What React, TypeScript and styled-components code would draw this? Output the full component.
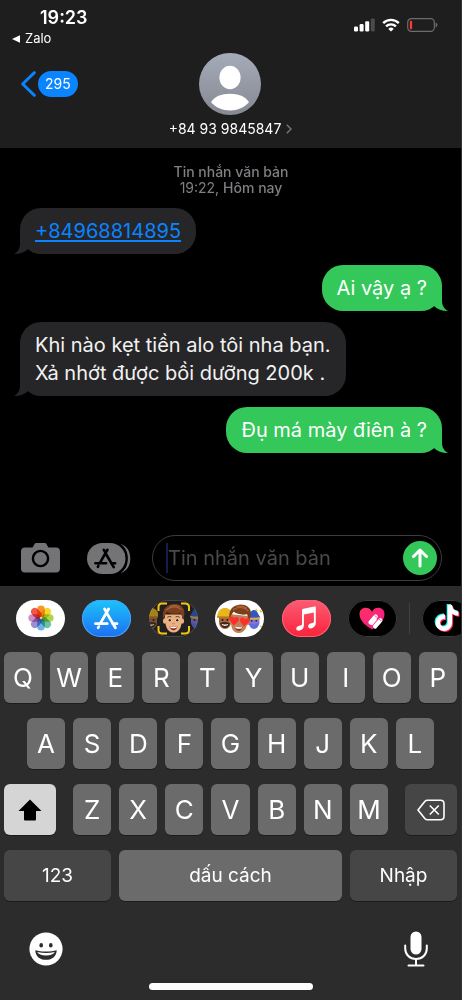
import React from "react";
import styled, { createGlobalStyle, css } from "styled-components";
import { FaTiktok } from "react-icons/fa6";

const GlobalStyle = createGlobalStyle`
  * { box-sizing: border-box; }
  body { margin: 0; background: #000; }
  button, input { font: inherit; color: inherit; }
  button { border: 0; padding: 0; background: none; cursor: pointer; }
  svg { display: block; flex: none; }
`;

const Screen = styled.div`
  min-height: 100vh;
  display: flex;
  flex-direction: column;
  overflow: hidden;
  background: #000;
  color: #fff;
  border-right: 1px solid #333;
  font-family: Inter, "Liberation Sans", sans-serif;
`;

const Header = styled.header`
  background: #1e1e1e;
  padding-bottom: 10px;
`;

const StatusBar = styled.div`
  display: flex;
  justify-content: space-between;
  height: 53px;
  padding: 7px 23px 0 12px;
`;

const StatusLeft = styled.div`
  display: flex;
  flex-direction: column;
`;

const Clock = styled.time`
  padding-left: 28px;
  font-size: 18px;
  line-height: 22px;
  font-weight: 600;
`;

const BackToApp = styled.a`
  display: flex;
  align-items: center;
  gap: 5px;
  margin-top: 1px;
  font-size: 13px;
  line-height: 17px;
  color: #fff;
  text-decoration: none;
`;

const StatusIcons = styled.div`
  display: flex;
  align-items: center;
  gap: 7px;
  height: 14px;
  margin-top: 11px;
`;

const NavBar = styled.nav`
  display: grid;
  grid-template-columns: 1fr auto 1fr;
  padding-left: 20px;
  padding-right: 20px;
`;

const BackButton = styled.button`
  display: flex;
  align-items: center;
  justify-self: start;
  gap: 2px;
  height: 62px;
`;

const UnreadBadge = styled.span`
  padding: 0 7px;
  border-radius: 13px;
  background: #0a84ff;
  font-size: 14px;
  line-height: 26px;
`;

const Contact = styled.button`
  display: flex;
  flex-direction: column;
  align-items: center;
  gap: 5px;
`;

const ContactName = styled.span`
  display: flex;
  align-items: center;
  gap: 5px;
  font-size: 14px;
  line-height: 18px;
`;

const Thread = styled.main`
  flex: 1;
  display: flex;
  flex-direction: column;
  gap: 11px;
  padding: 16px 19px 12px 20px;
`;

const ThreadMeta = styled.p`
  margin: 0 0 1px;
  text-align: center;
  font-size: 14px;
  line-height: 16px;
  font-weight: 500;
  color: #7f7f84;
`;

const MetaTime = styled.span`
  display: block;
  font-weight: 400;
`;

const MetaDay = styled.span`
  font-weight: 500;
`;

const BubbleBox = styled.div<{ $sent?: boolean }>`
  position: relative;
  align-self: ${(p) => (p.$sent ? "flex-end" : "flex-start")};
  padding: 9px 15px;
  border-radius: 21px;
  background: ${(p) => (p.$sent ? "#34c759" : "#262628")};
  color: ${(p) => (p.$sent ? "#fff" : "#f2f2f2")};
  font-size: 20px;
  line-height: 28px;
`;

const Tail = styled.svg<{ $sent?: boolean }>`
  position: absolute;
  bottom: 0;
  ${(p) =>
    p.$sent
      ? css`
          right: -6px;
          transform: scaleX(-1);
          fill: #34c759;
        `
      : css`
          left: -6px;
          fill: #262628;
        `}
`;

const PhoneLink = styled.a`
  color: #0a84ff;
  text-decoration: underline;
  text-decoration-thickness: 2px;
  text-underline-offset: 2px;
`;

const Composer = styled.form`
  display: flex;
  align-items: center;
  padding: 0 19px 5px 21px;
`;

const ComposerButton = styled.button<{ $after: number }>`
  margin-right: ${(p) => p.$after}px;
`;

const Field = styled.div`
  flex: 1;
  min-width: 0;
  display: flex;
  align-items: center;
  height: 46px;
  padding: 0 4px 0 13px;
  border: 1px solid #3c3c3e;
  border-radius: 23px;
`;

const Caret = styled.span`
  flex: none;
  width: 2px;
  height: 30px;
  background: #111f4d;
`;

const MessageInput = styled.input`
  flex: 1;
  min-width: 0;
  height: 30px;
  padding: 0;
  border: 0;
  outline: 0;
  background: transparent;
  font-size: 20px;
  &::placeholder {
    color: #4a4a4c;
    opacity: 1;
  }
`;

const SendButton = styled.button`
  display: grid;
  place-items: center;
  width: 34px;
  height: 34px;
  border-radius: 50%;
  background: #34c759;
`;

const KeyboardPanel = styled.section`
  background: #2c2c2c;
  padding-bottom: 10px;
`;

const AppStrip = styled.div`
  display: flex;
  align-items: center;
  height: 66px;
  padding: 0 0 2px 16px;
  overflow: hidden;
`;

const AppGroup = styled.div`
  flex: 1;
  display: flex;
  justify-content: space-between;
`;

const AppButton = styled.button<{ $fill: string; $edge?: string }>`
  flex: none;
  display: grid;
  place-items: center;
  width: 49px;
  height: 37px;
  border-radius: 19px;
  overflow: hidden;
  background: ${(p) => p.$fill};
  box-shadow: inset 0 0 0 1px ${(p) => p.$edge ?? "transparent"};
`;

const Divider = styled.span`
  width: 1px;
  height: 31px;
  margin: 0 12px;
  background: #404042;
`;

const ClippedApp = styled.div`
  width: 39px;
  display: flex;
`;

const Keys = styled.div`
  display: flex;
  flex-direction: column;
  gap: 15px;
`;

const KeyRow = styled.div<{ $inset?: number }>`
  display: flex;
  gap: 8px;
  padding: 0 ${(p) => p.$inset ?? 4}px;
`;

const LetterGroup = styled.div`
  flex: 1;
  display: flex;
  gap: 8px;
  margin: 0 9px;
`;

const Key = styled.button<{ $tone?: "letter" | "dark" | "active"; $width?: number }>`
  display: grid;
  place-items: center;
  flex: ${(p) => (p.$width ? `0 0 ${p.$width}px` : "1 1 0")};
  min-width: 0;
  height: 51px;
  border-radius: 6px;
  background: ${(p) =>
    p.$tone === "dark" ? "#464646" : p.$tone === "active" ? "#d5d5d5" : "#6b6b6b"};
  box-shadow: 0 1px 0 #1c1c1c;
  font-size: ${(p) => (p.$tone === "letter" ? 26 : 19)}px;
  font-weight: 400;
`;

const BottomBar = styled.div`
  display: flex;
  justify-content: space-between;
  align-items: center;
  height: 82px;
  padding: 14px 33px 0 29px;
`;

const HomeIndicator = styled.div`
  width: 164px;
  height: 7px;
  margin: 0 auto;
  border-radius: 4px;
  background: #fff;
`;

function Signal() {
  return (
    <svg width="21" height="14" viewBox="0 0 21 14" fill="#fff" aria-hidden="true">
      <rect x="0" y="8.5" width="4" height="5" rx="1.2" />
      <rect x="5.6" y="6" width="4" height="7.5" rx="1.2" />
      <rect x="11.2" y="3.3" width="4" height="10.2" rx="1.2" />
      <rect x="16.8" y="0.4" width="4" height="13.1" rx="1.2" fill="#4b4b4b" />
    </svg>
  );
}

function Wifi() {
  return (
    <svg width="18" height="14" viewBox="0 0 18 14" fill="none" stroke="#fff" strokeWidth="2.4" aria-hidden="true">
      <path d="M1.2 5.1a11 11 0 0 1 15.6 0" />
      <path d="M4.1 8.4a7 7 0 0 1 9.8 0" />
      <path d="M9 13.6 6.3 10.9a3.9 3.9 0 0 1 5.4 0z" fill="#fff" stroke="none" />
    </svg>
  );
}

function Battery() {
  return (
    <svg width="31" height="14" viewBox="0 0 31 14" fill="none" aria-hidden="true">
      <rect x="0.7" y="0.7" width="26.6" height="12.6" rx="3.6" stroke="#6c6c6c" strokeWidth="1.2" />
      <rect x="2.8" y="2.8" width="2.3" height="8.4" rx="0.9" fill="#ff3b30" />
      <path d="M28.6 4.6c1.2.4 1.8 1.3 1.8 2.4s-.6 2-1.8 2.4z" fill="#6c6c6c" />
    </svg>
  );
}

function Avatar() {
  return (
    <svg width="62" height="62" viewBox="0 0 62 62" aria-hidden="true">
      <defs>
        <linearGradient id="avatarFill" x1="0" y1="0" x2="0" y2="1">
          <stop offset="0" stopColor="#a5abb9" />
          <stop offset="1" stopColor="#858992" />
        </linearGradient>
      </defs>
      <circle cx="31" cy="31" r="31" fill="url(#avatarFill)" />
      <ellipse cx="31" cy="24.5" rx="10.6" ry="11.7" fill="#fff" />
      <path d="M12 49.3C15.5 43.6 22.3 40.8 31 40.8s15.500 2.800 19 8.500C45.300 54.600 38.600 57.500 31 57.500S16.700 54.600 12 49.300z" fill="#fff" />
    </svg>
  );
}

function BubbleTail({ sent }: { sent?: boolean }) {
  return (
    <Tail $sent={sent} width="18" height="20" viewBox="0 0 18 20" aria-hidden="true">
      <path d="M6 0V9.500C6 14.500 4 18 0 19.800C5.500 20.600 10.500 18.300 14 15L17 0z" />
    </Tail>
  );
}

function Bubble({ sent, children }: { sent?: boolean; children: React.ReactNode }) {
  return (
    <BubbleBox $sent={sent}>
      <BubbleTail sent={sent} />
      {children}
    </BubbleBox>
  );
}

function CameraIcon() {
  return (
    <svg width="39" height="30" viewBox="0 0 39 30" aria-hidden="true">
      <path
        fill="#747476"
        d="M4 4.500h6.500c1 0 1.500-.5 2-1.500l.6-1.200C13.700.6 14.300 0 15.500 0h8c1.200 0 1.800.6 2.400 1.800l.6 1.200c.5 1 1 1.500 2 1.500H35c2.500 0 4 1.500 4 4V25.500c0 2.500-1.500 4-4 4H4c-2.500 0-4-1.500-4-4V8.500c0-2.500 1.500-4 4-4z"
      />
      <circle cx="19.500" cy="15.500" r="7.600" fill="none" stroke="#000" strokeWidth="2.400" />
    </svg>
  );
}

/* The three crossed sticks that form the store's letter A. */
function StoreSticks() {
  return (
    <g fill="none" strokeWidth="2.800" strokeLinecap="round">
      <path d="M10.600 1.500 12.400 4.600M14.600 1.500 6.600 15.400M13.200 6.400 21.400 20.300" />
      <path d="M1.500 16.200H13.200M18.800 16.200H23M4.800 19.100 4.200 20.200" />
    </g>
  );
}

function StoreGrayIcon() {
  return (
    <svg width="44" height="31" viewBox="0 0 44 31" aria-hidden="true">
      <rect x="0" y="0" width="38.500" height="31" rx="15.500" fill="#747476" />
      <path d="M33.500 1C38.500 4 40.800 9.500 40.800 15.500S38.500 27 33.500 30C40 28.500 43.300 22.500 43.300 15.500S40 2.500 33.500 1z" fill="#747476" />
      <path d="M31.500.5C37.500 4 39.700 9.500 39.700 15.500S37.500 27 31.500 30.500" fill="none" stroke="#000" strokeWidth="1.400" />
      <svg x="7" y="5" width="23" height="21" viewBox="0 0 25 22" stroke="#000">
        <StoreSticks />
      </svg>
    </svg>
  );
}

function PhotosIcon() {
  const petals = ["#f9962a", "#f3d929", "#b0d352", "#6cc3a0", "#6fb2e8", "#9d90d0", "#cf8bc4", "#f1574b"];
  return (
    <svg width="26" height="26" viewBox="0 0 26 26" aria-hidden="true">
      {petals.map((color, i) => (
        <rect
          key={color}
          x="9.200"
          y="0.400"
          width="7.600"
          height="11.800"
          rx="3.800"
          fill={color}
          transform={`rotate(${i * 45} 13 13)`}
          style={{ mixBlendMode: "multiply" }}
        />
      ))}
    </svg>
  );
}

function StoreIcon() {
  return (
    <svg width="25" height="23" viewBox="0 0 25 22" stroke="#fff" aria-hidden="true">
      <StoreSticks />
    </svg>
  );
}

function MemojiFace({ hearts }: { hearts?: boolean }) {
  const skin = hearts ? "#c08255" : "#ecb081";
  return (
    <g>
      <ellipse cx="-8.800" cy="2.500" rx="1.800" ry="2.800" fill={skin} />
      <ellipse cx="8.800" cy="2.500" rx="1.800" ry="2.800" fill={skin} />
      <path d="M-8.500-4C-9 7-6.500 14 0 14S9 7 8.500-4z" fill={skin} />
      <path d="M-9.800 1C-12-6-9.500-11.500-4-13.500 2-16 10-14 10.800-7c.3 3-.3 5.500-1.100 8C8.700-1 8.300-3.500 7-5.500 2-4-3-4.500-6.500-6.500-8.300-4.500-8.800-2-9.800 1z" fill="#7c3f1d" />
      <path d="M-7.500-8.500C-3-12 3-12.500 8-9M-4-12Q1-14 6-11.500" fill="none" stroke="#a9653a" strokeWidth="1.300" />
      {hearts ? (
        <g fill="#ff2d2d">
          <path d="M-5 7-9.500 2.500c-2.500-3.500 2-6 4.200-2.500C-3.500-3.500.8-1.500-1 2.300z" />
          <path d="M5 7 1 2.300C-.8-1.500 3.500-3.500 5.300 0c2.200-3.500 6.700-1 4.200 2.500z" />
        </g>
      ) : (
        <g>
          <path d="M-6.300-1.200q2.200-1.400 4.200-.4M2.100-1.600q2-1 4.200.4" fill="none" stroke="#6d3a1e" strokeWidth="1" />
          <ellipse cx="-3.900" cy="1.800" rx="1.700" ry="1.500" fill="#fff" />
          <ellipse cx="3.900" cy="1.800" rx="1.700" ry="1.500" fill="#fff" />
          <circle cx="-3.800" cy="1.800" r="1.200" fill="#3a2316" />
          <circle cx="3.800" cy="1.800" r="1.200" fill="#3a2316" />
          <path d="M-1.200 5q1.200.9 2.400 0" fill="none" stroke="#bd7a50" strokeWidth="1" />
        </g>
      )}
      <path d="M-4 7.500Q0 8.800 4 7.500 3 11.800 0 11.800T-4 7.500z" fill="#8f2a26" />
      <path d="M-3.600 7.700Q0 8.800 3.600 7.700L3 9.300Q0 10.300-3 9.300z" fill="#fff" />
    </g>
  );
}

function BuilderFace() {
  return (
    <g>
      <path d="M-6-2v6c0 4 2.500 7 6 7s6-3 6-7v-6z" fill="#a9683a" />
      <path d="M-8-1C-7-8-4-10 0-10S7-8 8-1z" fill="#edb51c" />
      <path d="M-8-1H8" stroke="#bd8511" strokeWidth="1.600" />
      <path d="M-5 5Q0 3 5 5 4 10 0 10T-5 5z" fill="#42251a" />
      <path d="M-3 6.500Q0 8 3 6.500" fill="none" stroke="#fff" strokeWidth="1.300" />
      <circle cx="-2.500" cy="2" r="1" fill="#251611" />
      <circle cx="2.500" cy="2" r="1" fill="#251611" />
    </g>
  );
}

function WizardFace() {
  return (
    <g>
      <path d="M-6-3v8q6 8 12 0v-8z" fill="#8576d2" />
      <path d="M-7-2C-5-4-4-10 0-10S5-4 7-2z" fill="#3159bd" />
      <path d="M-7-1.500q7 3 14 0" fill="none" stroke="#e5b32c" strokeWidth="1.800" />
      <path d="M-6 4q6 4 12 0-1 7-6 7t-6-7z" fill="#5d6edb" />
      <circle cx="-2.500" cy="2" r="1" fill="#221c50" />
      <circle cx="2.500" cy="2" r="1" fill="#221c50" />
    </g>
  );
}

function MemojiCameraIcon() {
  return (
    <svg width="49" height="37" viewBox="0 0 49 37" aria-hidden="true">
      <g opacity="0.650">
        <g transform="translate(2 18)"><BuilderFace /></g>
        <g transform="translate(48 18)"><WizardFace /></g>
      </g>
      <rect x="9" y="2" width="32" height="33" rx="3" fill="#202020" />
      <g transform="translate(24.500 18.500)"><MemojiFace /></g>
      <path
        d="M9.500 11V7q0-3.500 3.500-3.500h5M32 3.500h4q4 0 4 3.500v4M40 26v4q0 3.500-4 3.500h-4M18 33.500h-5q-3.500 0-3.500-3.500v-4"
        fill="none"
        stroke="#f3c512"
        strokeWidth="2"
      />
    </svg>
  );
}

function MemojiStickerIcon() {
  return (
    <svg width="49" height="37" viewBox="0 0 49 37" aria-hidden="true">
      <g transform="translate(10 18)"><BuilderFace /></g>
      <g transform="translate(39 19) scale(0.9)"><WizardFace /></g>
      <path d="m45 10 1 2 2-1m-3 15 2 1m-5-16-1-2" stroke="#f2bd24" strokeWidth="1.200" fill="none" />
      <g transform="translate(24.500 19) rotate(6)"><MemojiFace hearts /></g>
    </svg>
  );
}

function MusicIcon() {
  return (
    <svg width="21" height="25" viewBox="0 0 21 25" fill="#fff" aria-hidden="true">
      <path d="M19.500.3 7.500 2.700C6.500 2.900 6 3.400 6 4.500v13.200c0 1-.5 1.500-1.500 1.700l-1.300.3C1.200 20.200.2 21.400.2 22.600c0 1.500 1.200 2.300 2.700 2.100 3-.4 5-2.400 5-5.400V8.600l10-2v8.700c0 1-.4 1.500-1.300 1.700l-1.500.3c-2 .5-3 1.600-3 3 0 1.500 1.300 2.300 2.800 2.100 2.900-.4 4.900-2.400 4.900-5.300V1.200c0-.7-.3-1-1.300-.9z" />
    </svg>
  );
}

/* A heart with two fingertips that reach up from its lower edge. */
function TouchIcon() {
  return (
    <svg width="26" height="23" viewBox="0 0 26 23" aria-hidden="true">
      <defs>
        <linearGradient id="touchFill" x1="0" y1="0" x2="1" y2="1">
          <stop offset="0" stopColor="#ff3160" />
          <stop offset="1" stopColor="#f51993" />
        </linearGradient>
      </defs>
      <path d="M13 22.500C7 19 .5 13.500.5 7 .5 3 3.200.7 6.700.7 9.700.7 12 2.300 13 4.800 14 2.300 16.300.7 19.300.7c3.500 0 6.200 2.300 6.200 6.300 0 6.500-6.500 12-12.500 15.500z" fill="url(#touchFill)" />
      <g stroke="#fff" strokeWidth="4.200">
        <path d="m11.500 15.500 5.200-6" strokeLinecap="round" />
        <path d="m16 19.500 5.400-6.200" strokeLinecap="round" />
        <path d="m12.300 17.800 5-5.800" strokeWidth="2" />
      </g>
      <path d="m15.600 8.500 2.200 1.700M20.300 12.300l2.200 1.700" stroke="#f84e80" strokeWidth="1" />
    </svg>
  );
}

function TikTokIcon() {
  return (
    <svg width="29" height="30" viewBox="0 0 29 30" aria-hidden="true">
      <FaTiktok x={1} y={1} size={26} color="#25f4ee" />
      <FaTiktok x={3} y={3} size={26} color="#fe2c55" />
      <FaTiktok x={2} y={2} size={26} color="#fff" />
    </svg>
  );
}

function EmojiIcon() {
  return (
    <svg width="34" height="34" viewBox="0 0 34 34" aria-hidden="true">
      <circle cx="17" cy="17" r="16.600" fill="#fff" />
      <ellipse cx="12.200" cy="13.300" rx="1.800" ry="2.200" fill="#2c2c2c" />
      <ellipse cx="21.800" cy="13.300" rx="1.800" ry="2.200" fill="#2c2c2c" />
      <path d="M6.300 18.200c3.200.9 6.500 1.200 10.700 1.200s7.500-.3 10.700-1.200c0 5.600-4.200 9.600-10.700 9.600S6.300 23.800 6.300 18.200z" fill="#2c2c2c" />
      <path d="M8.200 20q8.800 1.800 17.600 0-1.800 3.400-8.800 3.400T8.200 20z" fill="#fff" />
    </svg>
  );
}

function MicIcon() {
  return (
    <svg width="24" height="36" viewBox="0 0 24 36" fill="none" stroke="#fff" strokeWidth="2" strokeLinecap="round" aria-hidden="true">
      <rect x="6.500" y="0.500" width="11" height="23" rx="5.500" fill="#fff" stroke="none" />
      <path d="M1.200 14.500v2.800c0 6.500 4.500 10.700 10.800 10.700s10.800-4.200 10.800-10.700v-2.800M12 28v6.200M4.500 34.500h15" />
    </svg>
  );
}

const letters = (row: string) =>
  row.split("").map((letter) => (
    <Key key={letter} type="button" $tone="letter">
      {letter}
    </Key>
  ));

export default function App() {
  return (
    <Screen>
      <GlobalStyle />
      <Header>
        <StatusBar>
          <StatusLeft>
            <Clock>19:23</Clock>
            <BackToApp href="#zalo">
              <svg width="8" height="8" viewBox="0 0 8 8" aria-hidden="true">
                <path d="M0 4 8 .2v7.600z" fill="#fff" />
              </svg>
              Zalo
            </BackToApp>
          </StatusLeft>
          <StatusIcons>
            <Signal />
            <Wifi />
            <Battery />
          </StatusIcons>
        </StatusBar>
        <NavBar>
          <BackButton type="button">
            <svg width="16" height="26" viewBox="0 0 16 26" fill="none" aria-hidden="true">
              <path d="M14.300 1.700 2.700 13l11.600 11.300" stroke="#0a84ff" strokeWidth="3" strokeLinecap="round" strokeLinejoin="round" />
            </svg>
            <UnreadBadge>295</UnreadBadge>
          </BackButton>
          <Contact type="button">
            <Avatar />
            <ContactName>
              +84 93 9845847
              <svg width="6" height="10" viewBox="0 0 6 10" fill="none" aria-hidden="true">
                <path d="m.8.800 4.200 4.200-4.200 4.200" stroke="#77777b" strokeWidth="1.400" />
              </svg>
            </ContactName>
          </Contact>
        </NavBar>
      </Header>

      <Thread>
        <ThreadMeta>
          Tin nhắn văn bản
          <MetaTime>
            19:22, <MetaDay>Hôm nay</MetaDay>
          </MetaTime>
        </ThreadMeta>
        <Bubble>
          <PhoneLink href="tel:+84968814895">+84968814895</PhoneLink>
        </Bubble>
        <Bubble sent>Ai vậy ạ ?</Bubble>
        <Bubble>
          Khi nào kẹt tiền alo tôi nha bạn.
          <br />
          Xả nhớt được bồi dưỡng 200k .
        </Bubble>
        <Bubble sent>Đụ má mày điên à ?</Bubble>
      </Thread>

      <Composer onSubmit={(e) => e.preventDefault()}>
        <ComposerButton type="button" aria-label="Camera" $after={27}>
          <CameraIcon />
        </ComposerButton>
        <ComposerButton type="button" aria-label="Apps" $after={21}>
          <StoreGrayIcon />
        </ComposerButton>
        <Field>
          <Caret />
          <MessageInput aria-label="Tin nhắn văn bản" placeholder="Tin nhắn văn bản" />
          <SendButton type="submit" aria-label="Send">
            <svg width="18" height="20" viewBox="0 0 18 20" fill="none" stroke="#fff" strokeWidth="3" strokeLinecap="round" strokeLinejoin="round" aria-hidden="true">
              <path d="M9 18V2.500M2.500 8.500 9 2l6.500 6.500" />
            </svg>
          </SendButton>
        </Field>
      </Composer>

      <KeyboardPanel>
        <AppStrip>
          <AppGroup>
            <AppButton type="button" aria-label="Photos" $fill="#fff">
              <PhotosIcon />
            </AppButton>
            <AppButton type="button" aria-label="App Store" $fill="linear-gradient(#1cc3fb, #1d6ff2)" $edge="#4aa3f5">
              <StoreIcon />
            </AppButton>
            <AppButton type="button" aria-label="Memoji" $fill="#202020" $edge="#464646">
              <MemojiCameraIcon />
            </AppButton>
            <AppButton type="button" aria-label="Stickers" $fill="#fff">
              <MemojiStickerIcon />
            </AppButton>
            <AppButton type="button" aria-label="Music" $fill="linear-gradient(#fb5c74, #fa233b)" $edge="#fb6478">
              <MusicIcon />
            </AppButton>
            <AppButton type="button" aria-label="Digital Touch" $fill="#000" $edge="#3a3a3a">
              <TouchIcon />
            </AppButton>
          </AppGroup>
          <Divider />
          <ClippedApp>
            <AppButton type="button" aria-label="TikTok" $fill="#000" $edge="#3a3a3a">
              <TikTokIcon />
            </AppButton>
          </ClippedApp>
        </AppStrip>
        <Keys>
          <KeyRow>{letters("QWERTYUIOP")}</KeyRow>
          <KeyRow $inset={27}>{letters("ASDFGHJKL")}</KeyRow>
          <KeyRow>
            <Key type="button" aria-label="Shift" $tone="active" $width={52}>
              <svg width="24" height="22" viewBox="0 0 24 22" aria-hidden="true">
                <path d="M12 .5 23.500 12H18v8.500q0 1-1 1H7q-1 0-1-1V12H.5z" fill="#000" />
              </svg>
            </Key>
            <LetterGroup>{letters("ZXCVBNM")}</LetterGroup>
            <Key type="button" aria-label="Delete" $tone="dark" $width={52}>
              <svg width="28" height="22" viewBox="0 0 28 22" fill="none" stroke="#fff" strokeWidth="1.600" strokeLinejoin="round" aria-hidden="true">
                <path d="M10.500 1.200H23.500q3.500 0 3.500 3.500v12.600q0 3.500-3.500 3.500h-13q-1.500 0-2.500-1L1 11l7-8.800q1-1 2.500-1z" />
                <path d="m12.800 6.500 9 9m0-9-9 9" />
              </svg>
            </Key>
          </KeyRow>
          <KeyRow>
            <Key type="button" $tone="dark" $width={107}>123</Key>
            <Key type="button">dấu cách</Key>
            <Key type="button" $tone="dark" $width={107}>Nhập</Key>
          </KeyRow>
        </Keys>
        <BottomBar>
          <button type="button" aria-label="Emoji">
            <EmojiIcon />
          </button>
          <button type="button" aria-label="Dictation">
            <MicIcon />
          </button>
        </BottomBar>
        <HomeIndicator />
      </KeyboardPanel>
    </Screen>
  );
}
